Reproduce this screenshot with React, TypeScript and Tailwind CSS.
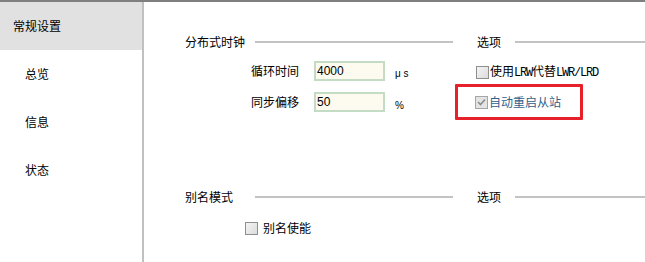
import React from "react";

const cjk = "font-['Noto_Sans_CJK_SC','Noto_Sans',sans-serif]";

function Box({ checked = false }: { checked?: boolean }) {
  if (checked) {
    return (
      <span className="inline-flex h-[13px] w-[13px] shrink-0 items-center justify-center border border-[#a6a6a6] bg-[#e4e4e4]">
        <svg width="9" height="8" viewBox="0 0 9 8">
          <path d="M1 4 L3.5 6.5 L8 1.5" fill="none" stroke="#8c8c8c" strokeWidth="1.6" />
        </svg>
      </span>
    );
  }
  return (
    <span className="inline-block h-[13px] w-[13px] shrink-0 border border-[#8f8f8f] bg-gradient-to-br from-[#f4f4f4] to-[#dcdcdc]" />
  );
}

function Header({ title }: { title: string }) {
  return (
    <div className="flex h-[16px] items-center pl-[41px]">
      <span className="w-[60px] text-[12px] leading-[16px] text-black">{title}</span>
      <span className="ml-[10px] h-[2px] w-[198px] bg-[#c3c3c3]" />
      <span className="ml-[24px] w-[24px] text-[12px] leading-[16px] text-black">选项</span>
      <span className="ml-[14px] h-[2px] flex-1 bg-[#c3c3c3]" />
    </div>
  );
}

export default function App() {
  const mono = "font-['Liberation_Mono',monospace] text-[12px] tracking-[-1.2px]";
  return (
    <div className={`h-[262px] w-[645px] overflow-hidden border-t-2 border-[#7f7f7f] bg-white ${cjk}`}>
      <div className="flex h-[260px]">
        <div className="w-[142px] shrink-0">
          <div className="flex h-[48px] items-center bg-[#e1e1e1] pl-[13px] text-[12px] text-black">常规设置</div>
          <div className="flex h-[48px] items-center pl-[25px] text-[12px] text-black">总览</div>
          <div className="flex h-[48px] items-center pl-[25px] text-[12px] text-black">信息</div>
          <div className="flex h-[48px] items-center pl-[25px] text-[12px] text-black">状态</div>
        </div>
        <div className="w-[2px] shrink-0 bg-[#c0c0c0]" />
        <div className="flex min-w-0 flex-1 flex-col pt-[32px]">
          <Header title="分布式时钟" />
          <div className="mt-[11px] flex">
            <div className="flex w-[311px] shrink-0 flex-col gap-[11px] pl-[107px]">
              <div className="flex h-[20px] items-center">
                <span className="w-[63px] text-[12px] text-black">循环时间</span>
                <div className="flex h-[20px] w-[71px] items-center border-2 border-[#c3dcc3] bg-[#fdfaef] pl-[1px] font-['Liberation_Sans',sans-serif] text-[12px] text-black">4000</div>
                <span className="ml-[10px] mt-[4px] font-['Liberation_Sans',sans-serif] text-[10px] text-black">μ s</span>
              </div>
              <div className="flex h-[20px] items-center">
                <span className="w-[63px] text-[12px] text-black">同步偏移</span>
                <div className="flex h-[20px] w-[71px] items-center border-2 border-[#c3dcc3] bg-[#fdfaef] pl-[1px] font-['Liberation_Sans',sans-serif] text-[12px] text-black">50</div>
                <span className="ml-[10px] mt-[6px] font-['Liberation_Sans',sans-serif] text-[10px] text-black">%</span>
              </div>
            </div>
            <div className="flex flex-col">
              <div className="ml-[21px] mt-[1px] flex h-[20px] items-center">
                <Box />
                <span className="ml-[1px] text-[12px] text-black">
                  使用<span className={mono}>LRW</span>代替<span className={mono}>LWR/LRD</span>
                </span>
              </div>
              <div className="mt-[2px] flex h-[36px] w-[128px] items-center rounded-[1px] border-[3px] border-[#e8202a] pl-[17px]">
                <Box checked />
                <span className="ml-[1px] text-[12px] text-[#2f5f8c]">自动重启从站</span>
              </div>
            </div>
          </div>
          <div className="mt-[69px]">
            <Header title="别名模式" />
          </div>
          <div className="mt-[15px] flex h-[16px] items-center pl-[101px]">
            <Box />
            <span className="ml-[5px] text-[12px] text-black">别名使能</span>
          </div>
        </div>
      </div>
    </div>
  );
}
